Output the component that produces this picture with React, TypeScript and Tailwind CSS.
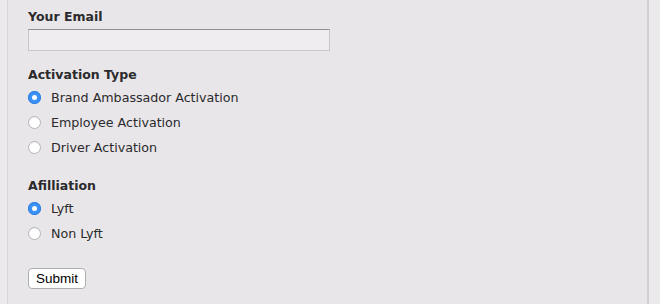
import { useState } from 'react'

const ACTIVATION_TYPES = [
  { value: 'brand', label: 'Brand Ambassador Activation' },
  { value: 'employee', label: 'Employee Activation' },
  { value: 'driver', label: 'Driver Activation' },
]

const AFFILIATIONS = [
  { value: 'lyft', label: 'Lyft' },
  { value: 'non', label: 'Non Lyft' },
]

function Radio({ checked }: { checked: boolean }) {
  return checked ? (
    <span className="flex h-[13px] w-[13px] items-center justify-center rounded-full bg-[#3a92f6] shadow-[inset_0_0_0_1px_#2f7fe0]">
      <span className="h-[5px] w-[5px] rounded-full bg-white" />
    </span>
  ) : (
    <span className="h-[13px] w-[13px] rounded-full border border-[#b4b3b6] bg-white shadow-[inset_0_1px_1px_rgba(0,0,0,0.06)]" />
  )
}

function RadioGroup({
  options,
  value,
  onChange,
}: {
  options: { value: string; label: string }[]
  value: string
  onChange: (v: string) => void
}) {
  return (
    <div className="flex flex-col">
      {options.map((opt) => (
        <label
          key={opt.value}
          onClick={() => onChange(opt.value)}
          className="flex h-[25px] cursor-pointer items-center"
        >
          <Radio checked={value === opt.value} />
          <span className="ml-[10px] text-[12.7px] tracking-[-0.03px] text-[#2b2a2c]">{opt.label}</span>
        </label>
      ))}
    </div>
  )
}

export default function App() {
  const [activation, setActivation] = useState('brand')
  const [affiliation, setAffiliation] = useState('lyft')
  const [email, setEmail] = useState('')

  return (
    <div className="flex h-[304px] w-[660px] bg-[#ebe9ec] font-['DejaVu_Sans',sans-serif]">
      <div className="ml-[7px] h-full w-[642px] border-l border-r-2 border-l-[#d8d6d9] border-r-[#d2d0d3] bg-[#e8e6e9]">
        <div className="flex flex-col pl-[20px] pt-[8px]">
          <div className="h-[18px] text-[12.5px] font-bold leading-[18px] text-[#2b2a2c]">Your Email</div>
          <input
            value={email}
            onChange={(e) => setEmail(e.target.value)}
            className="mt-[3px] h-[22px] w-[302px] border border-[#c7c6c9] border-t-[#8f8e91] bg-[#efedf0] px-1 text-[13px] outline-none"
          />

          <div className="mt-[15px] h-[18px] text-[12.5px] font-bold leading-[18px] text-[#2b2a2c]">Activation Type</div>
          <div className="mt-[1px]">
            <RadioGroup options={ACTIVATION_TYPES} value={activation} onChange={setActivation} />
          </div>

          <div className="mt-[17px] h-[18px] text-[12.5px] font-bold leading-[18px] text-[#2b2a2c]">Afilliation</div>
          <div className="mt-[1px]">
            <RadioGroup options={AFFILIATIONS} value={affiliation} onChange={setAffiliation} />
          </div>

          <div className="mt-[20px]">
            <button className="h-[21px] w-[58px] rounded-[4px] border border-[#aeadb0] bg-white text-[13.5px] leading-none text-black font-['Liberation_Sans',sans-serif]">
              Submit
            </button>
          </div>
        </div>
      </div>
    </div>
  )
}
